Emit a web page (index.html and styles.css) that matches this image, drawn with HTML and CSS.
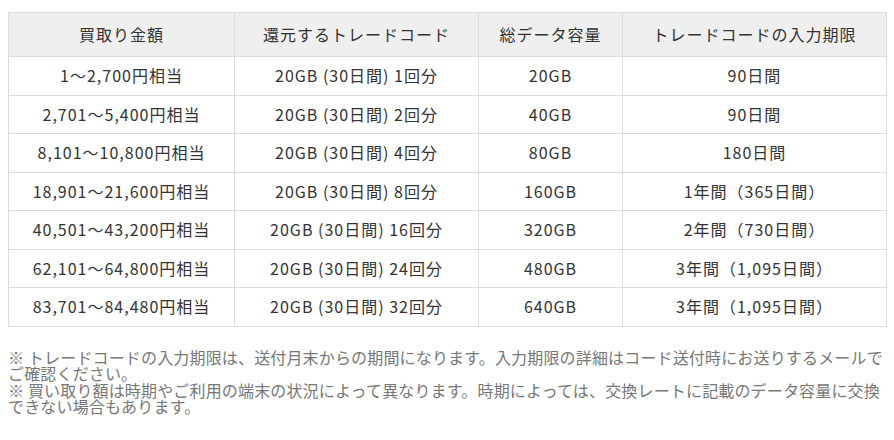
FILE: index.html
```html
<!DOCTYPE html>
<html lang="ja">
<head>
<meta charset="utf-8">
<link rel="stylesheet" href="styles.css">
</head>
<body>
<div class="wrap">
<table class="rate">
  <colgroup>
    <col class="c1"><col class="c2"><col class="c3"><col class="c4">
  </colgroup>
  <thead>
    <tr><th>買取り金額</th><th>還元するトレードコード</th><th>総データ容量</th><th>トレードコードの入力期限</th></tr>
  </thead>
  <tbody>
    <tr><td>1〜2,700円相当</td><td>20GB (30日間) 1回分</td><td>20GB</td><td>90日間</td></tr>
    <tr><td>2,701〜5,400円相当</td><td>20GB (30日間) 2回分</td><td>40GB</td><td>90日間</td></tr>
    <tr><td>8,101〜10,800円相当</td><td>20GB (30日間) 4回分</td><td>80GB</td><td>180日間</td></tr>
    <tr><td>18,901〜21,600円相当</td><td>20GB (30日間) 8回分</td><td>160GB</td><td>1年間（365日間）</td></tr>
    <tr><td>40,501〜43,200円相当</td><td>20GB (30日間) 16回分</td><td>320GB</td><td>2年間（730日間）</td></tr>
    <tr><td>62,101〜64,800円相当</td><td>20GB (30日間) 24回分</td><td>480GB</td><td>3年間（1,095日間）</td></tr>
    <tr><td>83,701〜84,480円相当</td><td>20GB (30日間) 32回分</td><td>640GB</td><td>3年間（1,095日間）</td></tr>
  </tbody>
</table>
<p class="notes">※ トレードコードの入力期限は、送付月末からの期間になります。入力期限の詳細はコード送付時にお送りするメールでご確認ください。<br>※ 買い取り額は時期やご利用の端末の状況によって異なります。時期によっては、交換レートに記載のデータ容量に交換できない場合もあります。</p>
</div>
</body>
</html>
```
FILE: styles.css
```css
html, body {
  margin: 0;
  padding: 0;
  background: #fff;
}
body {
  padding: 12px 8px 0 8px;
  font-family: "Noto Sans CJK JP", "Noto Sans", sans-serif;
  color: #333;
}
.rate {
  width: 878px;
  border-collapse: collapse;
  table-layout: fixed;
  font-size: 16px;
  letter-spacing: 1px;
}
.c1 { width: 226px; }
.c2 { width: 244px; }
.c3 { width: 144px; }
.c4 { width: 264px; }
.rate th,
.rate td {
  border: 1px solid #dcdcdc;
  text-align: center;
  font-weight: normal;
}
.rate th {
  background: #efefef;
  padding: 10px 4px;
  line-height: 23px;
}
.rate td {
  padding: 7px 4px 8px;
  line-height: 22.5px;
}
.notes {
  margin: 22px 0 0;
  font-size: 16px;
  letter-spacing: 0.16px;
  line-height: 16.6px;
  color: #777;
}
```
